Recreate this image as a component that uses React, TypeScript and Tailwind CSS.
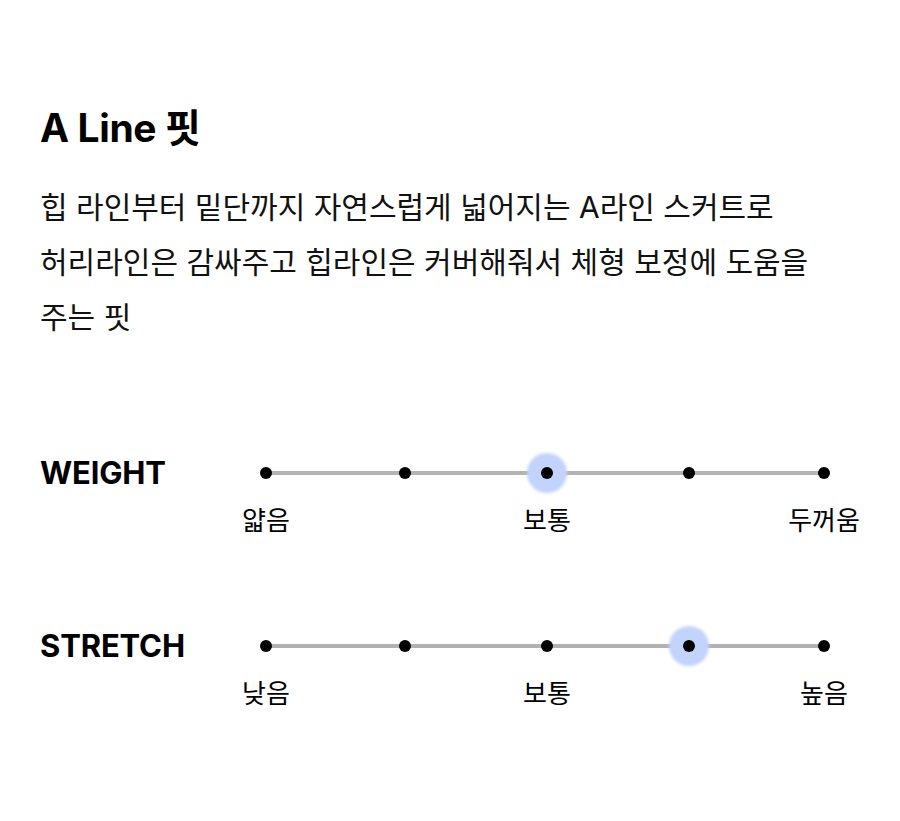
const FONT = "font-['Inter','Noto_Sans_CJK_KR',sans-serif]";

type ScaleProps = {
  title: string;
  labels: [string, string, string];
  active: number;
};

// spacing between the five dots, as measured on the design
const STEP_OFFSETS = ["", "ml-[127px]", "ml-[130px]", "ml-[130px]", "ml-[123px]"];

function Scale({ title, labels, active }: ScaleProps) {
  const stepLabels = [labels[0], "", labels[1], "", labels[2]];

  return (
    <div className="flex items-start">
      <div className="flex h-[28px] w-[220px] shrink-0 items-center text-[31px] font-bold tracking-[-0.005em] text-black">
        {title}
      </div>

      <div className="relative w-[570px]">
        <div className="absolute left-[6px] right-[6px] top-[12px] h-[4px] bg-[#b2b2b2]" />
        <div className="relative flex">
          {stepLabels.map((label, index) => (
            <div key={index} className={`flex w-[12px] flex-col items-center ${STEP_OFFSETS[index]}`}>
              <div className="relative flex h-[28px] w-[12px] items-center justify-center">
                {index === active && (
                  <span className="absolute left-1/2 top-1/2 h-[40px] w-[40px] -translate-x-1/2 -translate-y-1/2 rounded-full bg-[#c2d3fc] blur-[1.5px]" />
                )}
                <span className="relative h-[12px] w-[12px] rounded-full bg-black" />
              </div>
              <span className="mt-[20px] h-[28px] whitespace-nowrap text-[26px] leading-[28px] text-black">
                {label}
              </span>
            </div>
          ))}
        </div>
      </div>
    </div>
  );
}

export default function App() {
  return (
    <main className={`${FONT} min-h-[821px] w-[900px] bg-white px-[40px] pt-[106px] text-black`}>
      <h1 className="text-[39px] font-bold leading-[44px] tracking-[-0.01em]">A Line 핏</h1>

      <p className="mt-[30px] text-[30px] leading-[55px] text-[#111]">
        힙 라인부터 밑단까지 자연스럽게 넓어지는 A라인 스커트로
        <br />
        허리라인은 감싸주고 힙라인은 커버해줘서 체형 보정에 도움을
        <br />
        주는 핏
      </p>

      <div className="mt-[114px] flex flex-col gap-[97px]">
        <Scale title="WEIGHT" labels={["얇음", "보통", "두꺼움"]} active={2} />
        <Scale title="STRETCH" labels={["낮음", "보통", "높음"]} active={3} />
      </div>
    </main>
  );
}
